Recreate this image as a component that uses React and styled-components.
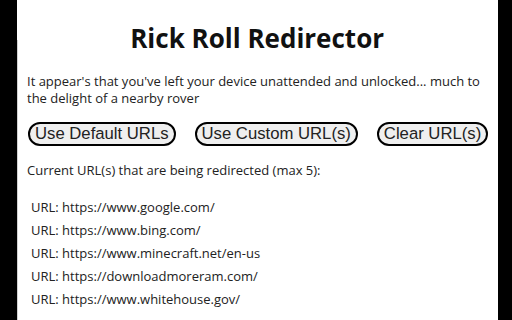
import React from "react";
import styled, { createGlobalStyle } from "styled-components";

const GlobalStyle = createGlobalStyle`
  html, body {
    margin: 0;
    padding: 0;
    background: #000;
  }
`;

const urls = [
  "https://www.google.com/",
  "https://www.bing.com/",
  "https://www.minecraft.net/en-us",
  "https://downloadmoreram.com/",
  "https://www.whitehouse.gov/",
];

export default function App() {
  return (
    <>
      <GlobalStyle />
      <Frame>
        <Popup>
          <Title>Rick Roll Redirector</Title>
          <Intro>
            It appear's that you've left your device unattended and unlocked... much to
            the delight of a nearby rover
          </Intro>
          <Buttons>
            <PillButton>Use Default URLs</PillButton>
            <PillButton>Use Custom URL(s)</PillButton>
            <PillButton>Clear URL(s)</PillButton>
          </Buttons>
          <Caption>Current URL(s) that are being redirected (max 5):</Caption>
          <UrlList>
            {urls.map((u) => (
              <UrlRow key={u}>URL: {u}</UrlRow>
            ))}
          </UrlList>
        </Popup>
      </Frame>
    </>
  );
}

const Frame = styled.div`
  width: 512px;
  height: 320px;
  display: flex;
  background: #000;
  padding: 0 16px 0 17px;
  box-sizing: border-box;
  overflow: hidden;
`;

const Popup = styled.div`
  flex: 1;
  background: #fff;
  padding: 0 10px;
  font-family: "Open Sans", "Noto Sans", sans-serif;
  color: #222;
  position: relative;
  &::before {
    content: "";
    position: absolute;
    left: 0;
    top: 40px;
    bottom: 0;
    width: 1px;
    background: #d0d0d0;
  }
`;

const Title = styled.h1`
  margin: 0 1px 0 0;
  padding-top: 20px;
  text-align: center;
  font-size: 26px;
  font-weight: 700;
  color: #111;
  line-height: 36px;
`;

const Intro = styled.p`
  margin: 17px 0 0;
  font-size: 13px;
  line-height: 17px;
`;

const Buttons = styled.div`
  display: flex;
  gap: 19px;
  margin-top: 15px;
  padding-left: 1px;
`;

const PillButton = styled.button`
  flex: none;
  white-space: nowrap;
  font-family: "Liberation Sans", Arial, sans-serif;
  font-size: 16.7px;
  color: #222;
  background: #efefef;
  border: 2px solid #000;
  border-radius: 999px;
  height: 24px;
  padding: 0 5px;
  line-height: 20px;
`;

const Caption = styled.div`
  margin-top: 16px;
  font-size: 13px;
  line-height: 17px;
`;

const UrlList = styled.div`
  margin-top: 20px;
  padding-left: 4px;
  display: flex;
  flex-direction: column;
  gap: 6px;
`;

const UrlRow = styled.div`
  font-size: 13px;
  line-height: 17px;
`;
